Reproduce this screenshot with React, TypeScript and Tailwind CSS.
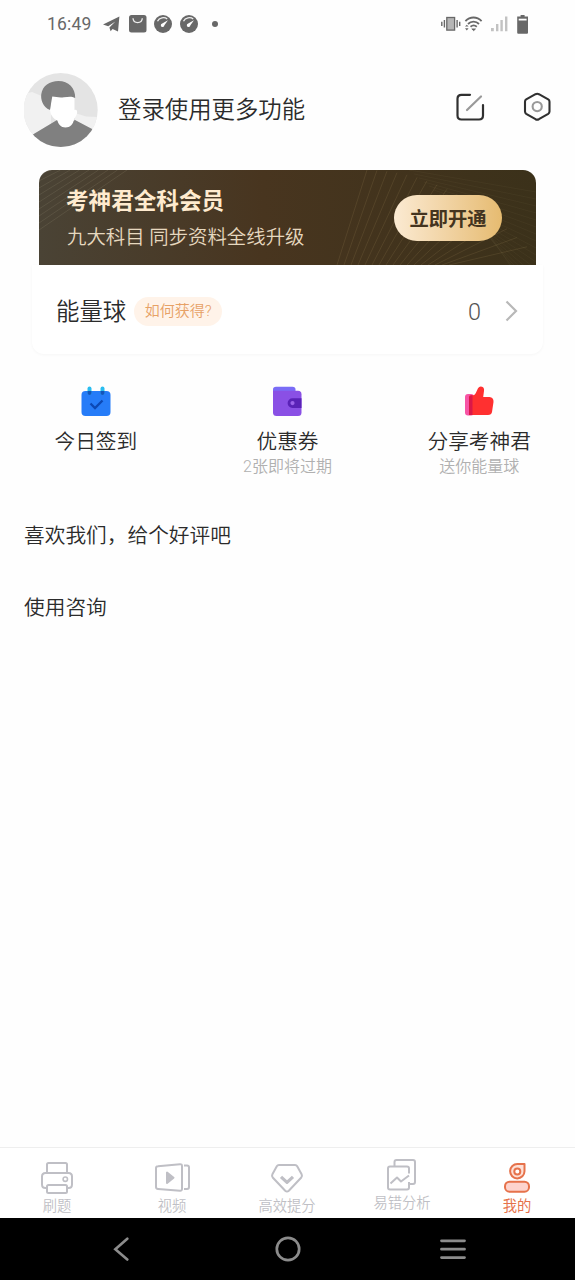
import type { ReactNode } from "react";

function StatusBar() {
  return (
    <div className="flex h-12 shrink-0 items-center pl-[47px] pr-[46px] text-[#686868]">
      <span className="w-[46px] text-[17.5px] leading-6 tracking-[0.2px]">16:49</span>
      <svg className="ml-[10px]" width="17" height="16" viewBox="0 0 17 16" fill="currentColor">
        <path d="M0 8.4 16.4 .6 15 15.6 9.6 13 7.6 15.2 6.4 11.6 12.4 5.4 5.2 10.3Z" />
      </svg>
      <svg className="ml-[9px]" width="18" height="18" viewBox="0 0 18 18">
        <rect width="17.5" height="17.5" rx="2.5" fill="currentColor" />
        <path d="M4 3.3C4.3 9 13 9 13.3 3.3" fill="none" stroke="#eee" strokeWidth="1.3" />
      </svg>
      <Gauge className="ml-[7px]" />
      <Gauge className="ml-2" />
      <span className="ml-[14px] size-[6px] rounded-full bg-[#686868]" />
      <svg className="ml-auto" width="20" height="16" viewBox="0 0 20 16" fill="none" stroke="currentColor">
        <rect x="5.8" y="1.5" width="7.8" height="12.6" fill="#b5b5b5" strokeWidth="1.3" />
        <path d="M3.4 4v7.6M.8 5.7v4.2M16.1 4v7.6M18.7 5.7v4.2" strokeWidth="1.4" />
      </svg>
      <svg className="ml-[3px]" width="19" height="16" viewBox="0 0 19 16" fill="none" stroke="currentColor">
        <path d="M1.4 5.1C6 .3 13 .3 17.6 5.1M4 8C7 4.9 12 4.9 15 8M6.5 10.7C8.6 9 10.8 9 12.8 10.7" strokeWidth="1.8" />
        <path d="M7.8 12.9 9.7 14.7 11.5 12.9Z" fill="currentColor" strokeWidth=".8" />
        <path d="M1 10.6 2.8 8.7 4.6 10.6ZM1 12.2 2.8 14.4 4.6 12.2Z" fill="currentColor" stroke="none" />
      </svg>
      <svg className="ml-[8px]" width="18" height="16" viewBox="0 0 18 16" fill="#c2c2c2">
        <path d="M0 12h2.8v3.3H0zM5 8h2.4v7.3H5zM9.4 4h2.4v11.3H9.4zM14 .6h2.4v14.7H14z" />
      </svg>
      <svg className="ml-[8px]" width="12" height="19" viewBox="0 0 12 19">
        <path d="M3.6 0h4v1.5H11v16.2q0 1-1 1H1.2q-1 0-1-1V1.5h3.4z" fill="currentColor" />
        <path d="M1.7 3.7h7.9v1.8H1.7z" fill="#fff" />
      </svg>
    </div>
  );
}

function Gauge({ className }: { className: string }) {
  return (
    <svg className={className} width="18" height="18" viewBox="0 0 18 18">
      <circle cx="9" cy="9" r="9" fill="#686868" />
      <path d="M3.5 6.2C5.2 2.5 10.5 1.7 13.2 4" fill="none" stroke="#eee" strokeWidth="1.3" />
      <path d="M14 5.2 10.4 10.3A1.8 1.8 0 1 1 8.2 8.5Z" fill="#fff" />
    </svg>
  );
}

function Avatar() {
  return (
    <svg width="74" height="74" viewBox="0 0 74 74">
      <clipPath id="avatar">
        <circle cx="36.7" cy="37" r="37" />
      </clipPath>
      <g clipPath="url(#avatar)">
        <path fill="#e4e4e4" d="M0 0h74v74H0z" />
        <path fill="#f1f1f1" d="M0 21 8 19 27 27V52L9 62H0zM51 40 62 43.5 74 44V60L51 47z" />
        <path fill="#808080" d="M8 62 33 47 41 52 51 47 70 57V74H8z" />
        <path fill="#fff" d="M28 23H50.5V37C53.5 36 54 40 52 43L50 46C49.5 51 46 54.5 41.5 54.5 37 54.5 34 51 33.5 47.5 29 46 26 41 26 36z" />
        <path fill="#808080" d="M26 37C18.5 34 16.5 26 17.3 21 18.5 13 25.5 8 34.5 8 44.5 8 51.5 15 51.2 25 47 22.7 44 24 40 24.2 35 24.8 32 23.8 28.3 23.5 27.2 28 27 32.5 26 37z" />
      </g>
    </svg>
  );
}

function Header() {
  return (
    <header className="flex h-[122px] shrink-0 items-start pl-6 pr-[23px] pt-[25px]">
      <Avatar />
      <h1 className="ml-5 mt-5 text-[23.4px] font-[350] leading-[35px] text-[#2b2b2b]">登录使用更多功能</h1>
      <svg className="ml-auto mt-[19px]" width="30" height="30" viewBox="0 0 30 30" fill="none" strokeWidth="2.2" strokeLinecap="round">
        <path d="M15 2.8H6.5Q2.5 2.8 2.5 6.8V23.5Q2.5 27.5 6.5 27.5H24Q28 27.5 28 23.5V13" stroke="#303030" />
        <path d="M12 18 26 4.5" stroke="#999" />
      </svg>
      <svg className="ml-[38px] mt-[19px]" width="29" height="30" viewBox="0 0 29 30" fill="none" strokeWidth="2.1">
        <path d="M12.5 2.2Q14.2 1.3 15.9 2.2L25.2 7.4Q26.5 8.2 26.5 9.7V19.5Q26.5 21 25.2 21.8L15.9 27.2Q14.2 28.1 12.5 27.2L3.2 21.8Q2 21 2 19.5V9.7Q2 8.2 3.2 7.4Z" stroke="#303030" />
        <circle cx="14.2" cy="14.6" r="4.6" stroke="#999" />
      </svg>
    </header>
  );
}

function BannerLines() {
  const fan = Array.from({ length: 17 }, (_, i) => i);
  return (
    <svg className="absolute inset-0" width="497" height="95" viewBox="0 0 497 95" fill="none">
      <g stroke="#b49765" strokeOpacity=".2" strokeWidth=".8">
        {fan.map((i) => (
          <path key={i} d={`M${298 + i * 7} 95 L${328 + i * 10} ${i * i * 0.3}`} />
        ))}
      </g>
      <g stroke="#9a8960" strokeOpacity=".1" strokeWidth=".8">
        {fan.map((i) => (
          <path key={i} d={`M${370 + i * 5} ${i * 4} L497 ${22 + i * 7}`} />
        ))}
      </g>
      <g stroke="#c5bd9e" strokeOpacity=".17" strokeWidth=".8">
        {fan.slice(0, 9).map((i) => (
          <path key={i} d={`M0 ${4 + i * 7} L${12 + i * 9.5} 0`} />
        ))}
      </g>
    </svg>
  );
}

function MemberBanner() {
  return (
    <section className="relative mx-[39px] flex h-[95px] shrink-0 items-center justify-between overflow-hidden rounded-t-[13px] bg-linear-to-r from-[#4a4335] via-[#48351f] via-45% to-[#3b311a] pl-[27px] pr-[34px]">
      <BannerLines />
      <div className="relative pt-[5px]">
        <h2 className="text-[22.6px] font-bold leading-8 text-[#ffebcf]">考神君全科会员</h2>
        <p className="mt-1 pl-px text-[19.4px] font-[350] leading-8 text-[#e6d8bf]">九大科目 同步资料全线升级</p>
      </div>
      <button className="relative h-[46px] w-[108px] rounded-full bg-linear-to-r from-[#fbead2] to-[#e6bb70] pt-[5px] text-[19.3px] font-bold text-[#443420]">
        立即开通
      </button>
    </section>
  );
}

function EnergyCard() {
  return (
    <section className="mx-8 flex h-[89px] shrink-0 items-center rounded-b-[12px] bg-white pl-6 pr-[25px] pt-[3px] shadow-[0_1px_3px_rgba(0,0,0,0.035)]">
      <span className="pt-[2px] text-[23.4px] font-[350] leading-8 text-[#2b2b2b]">能量球</span>
      <span className="ml-[8px] flex h-[29px] w-[88px] items-center justify-center rounded-full bg-[#fff3e9] text-[15px] font-[350] text-[#e7a166]">
        如何获得?
      </span>
      <span className="ml-auto pt-px text-[23.4px] font-light leading-8 text-[#555]">0</span>
      <svg className="ml-6" width="13" height="22" viewBox="0 0 13 22" fill="none" stroke="#b8b8b8" strokeWidth="2.2">
        <path d="M1.5 1.5 11 11 1.5 20.5" />
      </svg>
    </section>
  );
}

function CalendarIcon() {
  return (
    <svg width="30" height="31" viewBox="0 0 30 31">
      <rect x=".5" y="5" width="29" height="25" rx="4" fill="#267cf8" />
      <rect x="6.5" y=".5" width="4" height="8.5" rx="2" fill="#29bdf0" />
      <rect x="19.5" y=".5" width="4" height="8.5" rx="2" fill="#29bdf0" />
      <path d="M6.5 5h4v2q0 2-2 2t-2-2zM19.5 5h4v2q0 2-2 2t-2-2z" fill="#1454bb" />
      <path d="M9.5 17.5 14 22 21.5 14.5" fill="none" stroke="#0c48b4" strokeWidth="2.3" />
    </svg>
  );
}

function WalletIcon() {
  return (
    <svg width="30" height="31" viewBox="0 0 30 31">
      <path d="M1 8V3.5Q1 .7 4 .7H20.5Q23.5 .7 23.5 3.5V8z" fill="#7a6cf6" />
      <path d="M1 4.8H26Q29.5 4.8 29.5 8.3V26.5Q29.5 30 26 30H4.5Q1 30 1 26.5z" fill="#8a50e5" />
      <path d="M29.5 12.2H20.5a4.9 4.9 0 0 0 0 9.8h9z" fill="#5a22b7" />
      <circle cx="20.5" cy="17.1" r="2.1" fill="#9b62ea" />
    </svg>
  );
}

function ThumbIcon() {
  return (
    <svg width="30" height="31" viewBox="0 0 30 31">
      <rect x="1" y="8" width="9" height="21.5" rx="3" fill="#f754a5" />
      <path d="M5 11.5Q5 9.2 7.5 9.2H9.5Q11 9 11.8 7L14 2.2Q15.5 0 18 .8T20 5L19.2 11H25.5Q29.8 11.5 29.5 16L28 26Q27.5 29 24 29H5z" fill="#ff3030" />
      <path d="M5 11.5Q5 9.2 7.5 9.2H8.5V29H5z" fill="#db1748" />
    </svg>
  );
}

const shortcuts = [
  { label: "今日签到", hint: "", icon: <CalendarIcon /> },
  { label: "优惠券", hint: "2张即将过期", icon: <WalletIcon /> },
  { label: "分享考神君", hint: "送你能量球", icon: <ThumbIcon /> },
];

function Shortcuts() {
  return (
    <section className="grid h-[145px] shrink-0 grid-cols-3 pt-8 font-[350]">
      {shortcuts.map((s) => (
        <div key={s.label} className="flex flex-col items-center">
          {s.icon}
          <span className="mt-[11px] text-[20.7px] leading-7 text-[#2b2b2b]">{s.label}</span>
          <span className="text-[16px] leading-[21px] text-[#b0b0b0]">{s.hint}</span>
        </div>
      ))}
    </section>
  );
}

function PrinterIcon() {
  return (
    <svg width="34" height="34" viewBox="0 0 34 34" fill="none" stroke="currentColor" strokeWidth="2">
      <path d="M7 12V3.5Q7 2 8.5 2H25.5Q27 2 27 3.5V12M7 27H5.5Q2 27 2 23.5V15.5Q2 12 5.5 12H28.5Q32 12 32 15.5V23.5Q32 27 28.5 27H27" />
      <rect x="7" y="24" width="20" height="8" rx="1.5" />
      <circle cx="25.3" cy="18.2" r="2.2" strokeWidth="1.6" />
    </svg>
  );
}

function VideoIcon() {
  return (
    <svg width="36" height="34" viewBox="0 0 36 34" fill="none" stroke="currentColor" strokeWidth="2" strokeLinejoin="round">
      <path d="M4 5.2 26 3.2Q28 3.1 28 5V27.8Q28 30 26 29.8L4 28Q2 27.8 2 26V7Q2 5.3 4 5.2ZM30 4.6H33Q35 4.6 35 6.6V26Q35 28 33 28H30" />
      <path d="M13 11.5V22L19.5 16.7Z" fill="currentColor" />
    </svg>
  );
}

function ScoreIcon() {
  return (
    <svg width="34" height="34" viewBox="0 0 34 34" fill="none" stroke="currentColor" strokeWidth="2" strokeLinejoin="round">
      <path d="M9 4H25Q26.5 4 27.2 5.3L31.6 13.2Q32.5 15 31.3 16.5L18.8 29.7Q17 31.3 15.2 29.7L2.7 16.5Q1.5 15 2.4 13.2L6.8 5.3Q7.5 4 9 4Z" />
      <path d="M11 15.8 17 21.4 23 15.8" strokeWidth="3.2" />
    </svg>
  );
}

function AnalysisIcon() {
  return (
    <svg width="34" height="34" viewBox="0 0 34 34" fill="none" stroke="currentColor" strokeWidth="2" strokeLinejoin="round">
      <path d="M9.5 8.5V4Q9.5 2 11.5 2H28Q30 2 30 4V24Q30 26 28 26H24.5" />
      <path d="M24 15.5V10.5Q24 8.5 22 8.5H5Q3 8.5 3 10.5V29.5Q3 31.5 5 31.5H22Q24 31.5 24 29.5V24" />
      <path d="M5.5 25.5 12 19.5 16 23.5 24 17.5" />
    </svg>
  );
}

function MineIcon() {
  return (
    <svg width="34" height="34" viewBox="0 0 34 34" fill="#fee0d6" stroke="currentColor" strokeWidth="2">
      <path d="M24.5 3H17.5A7.2 7.2 0 1 0 24.5 10.2Z" strokeLinejoin="round" />
      <circle cx="17.3" cy="10.5" r="3" fill="#fff" />
      <rect x="5" y="20.7" width="24" height="10" rx="4.5" fill="#fdd3cd" />
    </svg>
  );
}

const tabs: { label: string; icon: ReactNode; color: string }[] = [
  { label: "刷题", icon: <PrinterIcon />, color: "pt-[13px] font-[350] text-[#bfbfc5]" },
  { label: "视频", icon: <VideoIcon />, color: "pt-[13px] font-[350] text-[#bfbfc5]" },
  { label: "高效提分", icon: <ScoreIcon />, color: "pt-[13px] font-[350] text-[#bfbfc5]" },
  { label: "易错分析", icon: <AnalysisIcon />, color: "pt-[10px] font-[350] text-[#bfbfc5]" },
  { label: "我的", icon: <MineIcon />, color: "pt-[13px] text-[#e6724b]" },
];

function TabBar() {
  return (
    <nav className="grid h-[71px] shrink-0 grid-cols-5 border-t border-[#eee] bg-white">
      {tabs.map((tab) => (
        <div key={tab.label} className={`flex flex-col items-center pr-px ${tab.color}`}>
          {tab.icon}
          <span className="mt-px text-[14.3px] leading-[21px]">{tab.label}</span>
        </div>
      ))}
    </nav>
  );
}

function SystemNav() {
  return (
    <div className="flex h-[62px] shrink-0 items-center bg-black pl-[113px] text-[#8c8c8c]">
      <svg width="16" height="24" viewBox="0 0 16 24" fill="none" stroke="currentColor" strokeWidth="2.6" strokeLinecap="round">
        <path d="M14.3 1.7 2.3 12.2 14.3 22.5" />
      </svg>
      <svg className="ml-[146px]" width="26" height="26" viewBox="0 0 26 26" fill="none" stroke="currentColor" strokeWidth="2.7">
        <circle cx="13" cy="13" r="11.2" />
      </svg>
      <svg className="ml-[139px]" width="26" height="22" viewBox="0 0 26 22" stroke="currentColor" strokeWidth="2.8" strokeLinecap="round">
        <path d="M1.5 2.8h23M1.5 11.2h23M1.5 19.6h23" />
      </svg>
    </div>
  );
}

export default function App() {
  return (
    <div className="flex h-screen w-full flex-col overflow-hidden bg-[#fefefe] font-['Roboto','Noto_Sans_CJK_SC',sans-serif]">
      <StatusBar />
      <Header />
      <MemberBanner />
      <EnergyCard />
      <Shortcuts />
      <main className="flex-1 px-6 pt-[2px] text-[20.7px] font-[350] text-[#2b2b2b]">
        <p className="flex h-[72px] items-center">喜欢我们，给个好评吧</p>
        <p className="flex h-[72px] items-center">使用咨询</p>
      </main>
      <TabBar />
      <SystemNav />
    </div>
  );
}
